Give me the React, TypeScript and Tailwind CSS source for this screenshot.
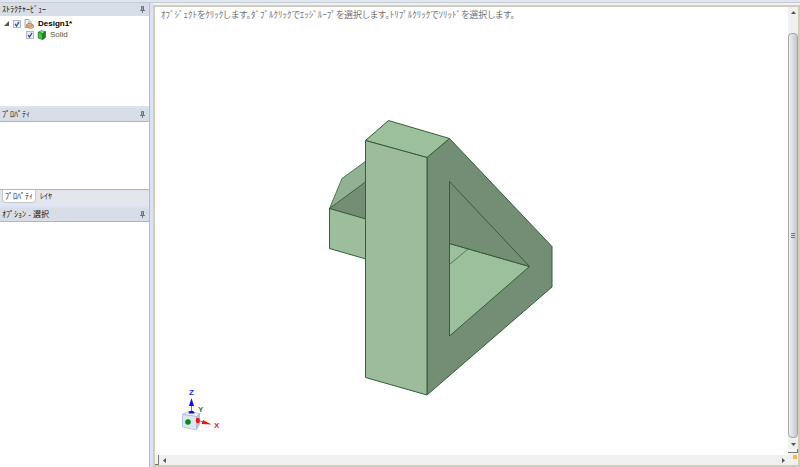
import type { ReactNode } from "react";

const PinIcon = () => (
  <svg className="h-[7px] w-[5px]" viewBox="0 0 5 7" fill="none" stroke="#566073">
    <path d="M1.5 4V.5h2V4M3 .5V4M0 4.500h5M2.5 4.500V7" strokeWidth=".8" />
  </svg>
);

const PanelHeader = ({ title }: { title: string }) => (
  <div className="flex h-[13px] shrink-0 items-center justify-between bg-[#d8dee7] pl-[2px] pr-1 text-[#111]">
    <h2>{title}</h2>
    <button type="button" aria-label={`${title} pin`}>
      <PinIcon />
    </button>
  </div>
);

const CheckBox = ({ label }: { label: string }) => (
  <span className="grid size-2 shrink-0 place-items-center">
    <input
      type="checkbox"
      defaultChecked
      aria-label={label}
      className="peer col-start-1 row-start-1 size-2 appearance-none border border-[#b4bac6] bg-[#e8ecf6]"
    />
    <svg className="pointer-events-none invisible col-start-1 row-start-1 size-2 peer-checked:visible" viewBox="0 0 8 8" fill="none" stroke="#3d55a8" strokeWidth="1.3">
      <path d="M2 3.8 3.5 6 6 1.8" />
    </svg>
  </span>
);

const DesignIcon = () => (
  <svg className="size-[10px] shrink-0" viewBox="0 0 10 10">
    <path d="M1 .5h4l2 2v6H1z" fill="#f5f7fc" stroke="#8495b5" strokeWidth=".8" />
    <path d="M2.5 5.5 5 4l4.500 2v2.500l-3 1-4-1.500z" fill="#e5b885" stroke="#936337" strokeWidth=".6" />
    <path d="m3 6 3 1.200L9 6M5 2v3" fill="none" stroke="#a97144" strokeWidth=".6" />
  </svg>
);

const SolidIcon = () => (
  <svg className="size-[10px] shrink-0" viewBox="0 0 10 10" stroke="#14701b" strokeWidth=".7" strokeLinejoin="round">
    <path d="m1.200 2.300 3-1.600 4.300 1-2.800 1.800z" fill="#a9f3a2" />
    <path d="m1.200 2.300 4.500 1.200v6L1.200 8z" fill="#42c848" />
    <path d="m5.700 3.500 2.800-1.800v5.800l-2.800 2z" fill="#188b24" />
  </svg>
);

const Sidebar = () => (
  <aside className="flex w-[150px] shrink-0 flex-col border-r border-[#b5bcc8] bg-white text-[8px]">
    <PanelHeader title="ｽﾄﾗｸﾁｬｰﾋﾞｭｰ" />
    <div className="flex h-[90px] shrink-0 flex-col pl-1 pt-[2px] leading-[11px]">
      <div className="flex h-[11px] items-center">
        <svg className="mr-1 size-[5px]" viewBox="0 0 5 5">
          <path d="M5 0v5H0z" fill="#555" />
        </svg>
        <CheckBox label="Design1" />
        <span className="ml-[3px] flex items-center gap-1">
          <DesignIcon />
          <span className="font-bold text-black">Design1*</span>
        </span>
      </div>
      <div className="flex h-[11px] items-center pl-[22px]">
        <CheckBox label="Solid" />
        <span className="ml-[3px] flex items-center gap-[3px]">
          <SolidIcon />
          <span className="text-[#625b2b]">Solid</span>
        </span>
      </div>
    </div>
    <div className="h-[2px] shrink-0 bg-[#dbe2f3]" />
    <PanelHeader title="ﾌﾟﾛﾊﾟﾃｨ" />
    <div className="h-[69px] shrink-0 border-y border-[#b0b4bb]" />
    <div className="flex h-4 shrink-0 bg-[#e3e7ed] pl-[2px] text-[#222]">
      <button type="button" className="h-[13px] rounded-b-sm border border-t-0 border-[#c3c8d0] bg-white px-[2px]">
        ﾌﾟﾛﾊﾟﾃｨ
      </button>
      <button type="button" className="h-[13px] px-1">
        ﾚｲﾔ
      </button>
    </div>
    <div className="h-[2px] shrink-0 bg-[#dbe2f3]" />
    <PanelHeader title="ｵﾌﾟｼｮﾝ - 選択" />
    <div className="flex-1 border-t border-[#b0b4bb]" />
  </aside>
);

const Bracket = () => (
  <svg className="absolute inset-0 h-full w-full" viewBox="155 7 633 448" stroke="#315f37" strokeLinejoin="round" role="img" aria-label="Solid">
    {/* rear leg */}
    <path d="m329.5 208.5 12.5-30 24-17.5v21z" fill="#92b093" strokeWidth=".8" />
    <path d="m329.5 208.5 36.5-27v38z" fill="#738e74" strokeWidth=".8" />
    <path d="m329.5 208.5 36.5 10.5v40l-36.5-10.5z" fill="#9cbe9c" />
    {/* triangular side with its opening */}
    <path d="M427 157.5 449.5 138.5 552 246.5V287L427 395z" fill="#738e74" />
    <path d="M449.5 243.5 529.5 266.5 449.5 336z" fill="#9cc09c" />
    <path d="M449.5 181.5 529.5 266.5 449.5 243.5z" fill="#738e74" />
    <path d="M449.5 264.5 468 249" strokeWidth=".7" />
    {/* upright */}
    <path d="M365.5 140.5 388.5 120.5 449.5 138.5 427 157.5z" fill="#9cc09c" />
    <path d="M365.5 140.5 427 157.5V395L365.5 377.5z" fill="#9cbc9c" />
  </svg>
);

const AxisTriad = () => (
  <svg className="absolute bottom-[13px] left-[17px] h-[60px] w-[54px]" viewBox="172 382 54 60" fontFamily="Liberation Sans, sans-serif" fontSize="8" fontWeight="bold" role="img" aria-label="XYZ">
    <path d="m182.5 414.5 6-3 11 2-3 3z" fill="#eef3fc" stroke="#a6b4cc" strokeWidth=".7" />
    <path d="m182.5 414.5 14 2v13.500l-14-3z" fill="#dde7f2" stroke="#a6b4cc" strokeWidth=".7" />
    <path d="m196.5 416.5 3-3v11l-3 5z" fill="#bfcce0" stroke="#a6b4cc" strokeWidth=".7" />
    <path d="M191.5 411v-6M200 421l4 1.200" stroke="#777fa5" />
    <path d="m191.5 398 2.500 8h-5z" fill="#0b13dc" />
    <path d="m211.5 424.500-10-.5 1.500-4z" fill="#ec1515" />
    <path d="M188.500 413.500a3 2.800 0 0 1 6 0z" fill="#0d12c9" />
    <circle cx="188" cy="422" r="2.800" fill="#078a18" />
    <ellipse cx="197.800" cy="420.500" rx="2" ry="2.800" fill="#f01717" />
    <text x="189" y="395" fill="#2426e3">Z</text>
    <text x="198" y="412" fill="#327c38">Y</text>
    <text x="214" y="428" fill="#f02222">X</text>
  </svg>
);

const ScrollButton = ({ label, d }: { label: string; d: string }) => (
  <button type="button" aria-label={label} className="grid size-[10px] shrink-0 place-items-center">
    <svg className="size-[5px]" viewBox="0 0 5 5" fill="#555">
      <path d={d} />
    </svg>
  </button>
);

const VerticalScrollbar = () => (
  <div className="flex w-[10px] shrink-0 flex-col items-center bg-[#f0f0f0]">
    <ScrollButton label="Scroll up" d="M0 4 2.500 1 5 4z" />
    <div className="h-4 shrink-0" />
    <div className="flex w-[10px] flex-1 flex-col items-center justify-center gap-px rounded-sm border border-[#a5a7ad] bg-linear-to-r from-[#f1f1f3] to-[#c5c6cb]">
      <i className="h-px w-1 bg-[#777]" />
      <i className="h-px w-1 bg-[#777]" />
      <i className="h-px w-1 bg-[#777]" />
    </div>
    <div className="flex shrink-0 flex-col pb-[2px] pt-px">
      <ScrollButton label="Scroll down" d="M0 1h5L2.500 4z" />
      <div className="h-1 w-[10px] border-b border-r border-[#777] bg-[#f4f4f4]" />
    </div>
  </div>
);

const Page = ({ children }: { children: ReactNode }) => (
  <div className="flex h-screen flex-col overflow-hidden bg-[#dbe2f3] font-['Liberation_Sans','Noto_Sans_CJK_JP',sans-serif] text-[9px] leading-[13px]">
    <div className="h-[3px] shrink-0 border-b border-[#c7cdd5] bg-[#dfe6ee]" />
    {children}
  </div>
);

export default function App() {
  return (
    <Page>
      <div className="flex min-h-0 flex-1">
        <Sidebar />
        <main className="flex min-w-0 flex-1 flex-col pl-[3px]">
          <div className="h-[2px] shrink-0 bg-[#f0f3f7]" />
          <div className="flex min-h-0 flex-1 flex-col border-2 border-[#d2ccba] bg-white">
            <div className="flex min-h-0 flex-1">
              <section className="relative min-w-0 flex-1">
                <Bracket />
                <AxisTriad />
                <p className="relative whitespace-nowrap pl-[6px] pt-[2px] text-[#747474] [font-feature-settings:'palt']">
                  ｵﾌﾞｼﾞｪｸﾄをｸﾘｯｸします。ﾀﾞﾌﾞﾙｸﾘｯｸでｴｯｼﾞﾙｰﾌﾟを選択します。ﾄﾘﾌﾟﾙｸﾘｯｸでｿﾘｯﾄﾞを選択します。
                </p>
              </section>
              <VerticalScrollbar />
            </div>
            <div className="flex h-[10px] shrink-0 items-center bg-[#f0f0f0]">
              <div className="h-[10px] w-1 border-b border-r border-[#777] bg-[#f4f4f4]" />
              <ScrollButton label="Scroll left" d="M4 0v5L1 2.500z" />
              <div className="flex-1" />
              <ScrollButton label="Scroll right" d="M1 0v5l3-2.500z" />
              <div className="ml-1 flex h-[10px] w-[6px] justify-center">
                <i className="size-1 bg-[#ffb54b]" />
              </div>
            </div>
          </div>
        </main>
      </div>
    </Page>
  );
}
